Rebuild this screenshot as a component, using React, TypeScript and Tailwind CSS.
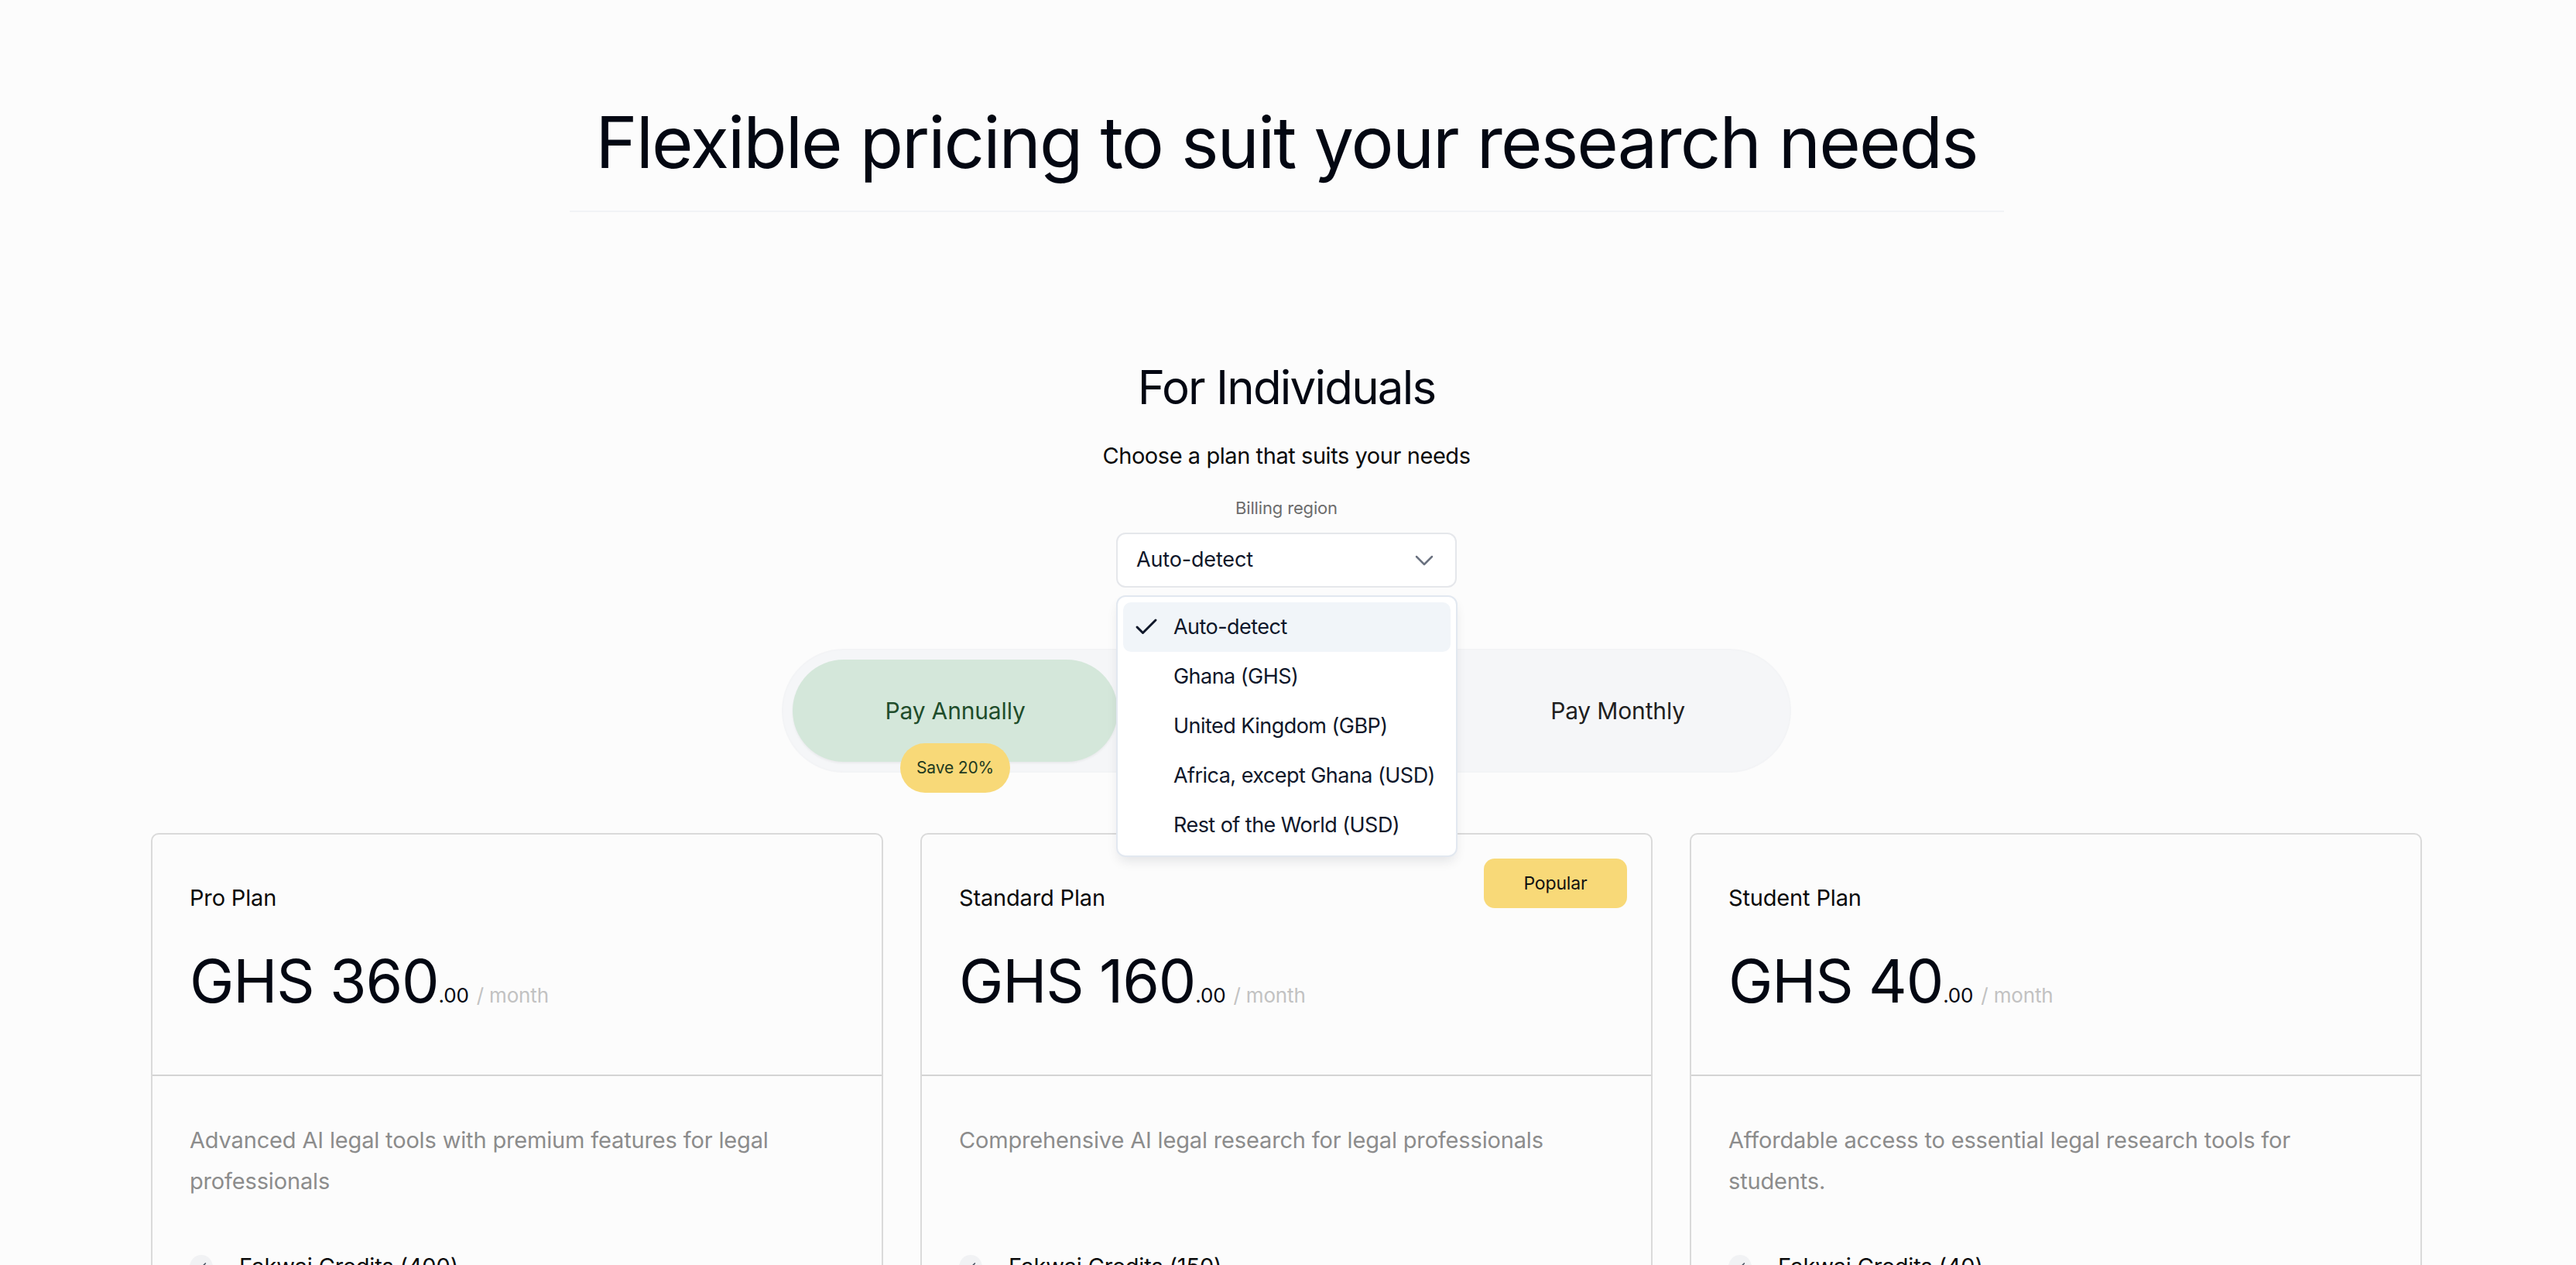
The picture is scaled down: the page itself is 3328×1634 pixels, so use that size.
import { Check, ChevronDown } from "lucide-react";

type Plan = {
  name: string;
  price: string;
  description: string;
  features: string[];
  popular?: boolean;
};

const plans: Plan[] = [
  {
    name: "Pro Plan",
    price: "GHS 360",
    description: "Advanced AI legal tools with premium features for legal professionals",
    features: ["Fakwai Credits (400)", "Unlimited case law search", "Priority support"],
  },
  {
    name: "Standard Plan",
    price: "GHS 160",
    description: "Comprehensive AI legal research for legal professionals",
    features: ["Fakwai Credits (150)", "Case law search", "Email support"],
    popular: true,
  },
  {
    name: "Student Plan",
    price: "GHS 40",
    description: "Affordable access to essential legal research tools for students.",
    features: ["Fakwai Credits (40)", "Case law search", "Community support"],
  },
];

const regions = [
  "Auto-detect",
  "Ghana (GHS)",
  "United Kingdom (GBP)",
  "Africa, except Ghana (USD)",
  "Rest of the World (USD)",
];

function RegionSelect() {
  const selected = "Auto-detect";
  return (
    <div className="relative mt-[16px] w-[440px]">
      <button className="flex h-[71px] w-full items-center justify-between rounded-[12px] border-2 border-[#e5e7eb] bg-white pl-[24px] pr-[20px] text-[27px] text-[#0f172a]">
        <span>{selected}</span>
        <ChevronDown size={40} strokeWidth={1.5} className="text-[#6b7280]" />
      </button>
      <div className="absolute left-0 top-[81px] z-10 w-[441px] rounded-[12px] border-2 border-[#e2e8f0] bg-white p-[7px] shadow-[0_8px_16px_-4px_rgba(15,23,42,0.12)]">
        {regions.map((r) => (
          <div
            key={r}
            className={`relative flex h-[64px] items-center rounded-[10px] pl-[65px] text-[27px] tracking-[-0.02em] text-[#0f172a] ${
              r === selected ? "bg-[#f1f5f9]" : ""
            }`}
          >
            {r === selected && (
              <Check size={36} strokeWidth={2} className="absolute left-[12px] top-[14px]" />
            )}
            {r}
          </div>
        ))}
      </div>
    </div>
  );
}

function BillingToggle() {
  return (
    <div className="mt-[81px] flex h-[156px] w-[1300px] justify-between rounded-full bg-[#f5f6f8] p-[12px] shadow-[0_0_0_2px_rgba(240,241,244,0.8)]">
      <button className="relative h-[132px] w-[420px] rounded-full bg-[#d4e7da] text-[30px] text-[#1f4d2b] shadow-[0_2px_3px_rgba(0,0,0,0.05)]">
        Pay Annually
        <span className="absolute left-1/2 top-[108px] flex h-[64px] w-[142px] -translate-x-1/2 items-center justify-center rounded-full bg-[#f8d978] text-[21px] text-[#1f3a1f]">
          Save 20%
        </span>
      </button>
      <button className="h-[132px] w-[420px] rounded-full text-[30px] text-[#1f1f1f]">Pay Monthly</button>
    </div>
  );
}

function PlanCard({ plan }: { plan: Plan }) {
  return (
    <div className="relative rounded-[10px] border-2 border-[#dadada] bg-[#fcfcfc]">
      {plan.popular && (
        <span className="absolute right-[31px] top-[31px] flex h-[64px] w-[185px] items-center justify-center rounded-[14px] bg-[#f8d978] text-[23px] text-[#111111]">
          Popular
        </span>
      )}
      <div className="border-b-2 border-[#d4d4d4] px-[48px] pb-[82px] pt-[62px]">
        <h3 className="text-[29px] leading-[40px] text-[#0a0a0a]">{plan.name}</h3>
        <div className="mt-[49px] flex items-baseline">
          <span className="text-[77px] leading-[77px] tracking-[-0.015em] text-[#030712]">{plan.price}</span>
          <span className="text-[26px] text-[#030712]">.00</span>
          <span className="ml-[10px] text-[26px] text-[#c2c2c2]">/ month</span>
        </div>
      </div>
      <div className="px-[48px] pb-[56px] pt-[56px]">
        <p className="min-h-[106px] text-[29px] leading-[53px] text-[#8c8c8c]">{plan.description}</p>
        <ul className="mt-[64px] flex flex-col gap-[20px]">
          {plan.features.map((f) => (
            <li key={f} className="flex h-[40px] items-center gap-[34px] text-[29px] text-[#0a0a0a]">
              <span className="flex h-[30px] w-[30px] items-center justify-center rounded-full bg-[#f1f2f4]">
                <Check size={16} strokeWidth={2.5} className="text-[#4b5563]" />
              </span>
              {f}
            </li>
          ))}
        </ul>
      </div>
    </div>
  );
}

export default function App() {
  return (
    <div className="h-screen overflow-hidden bg-[#fcfcfc] pr-[4px] font-['Inter',sans-serif] tracking-[-0.01em]">
      <div className="flex flex-col items-center">
        <h1 className="pt-[134px] text-[92px] leading-[100px] tracking-[-0.021em] text-[#030712]">
          Flexible pricing to suit your research needs
        </h1>
        <div className="mt-[38px] h-[2px] w-[1853px] bg-[#f1f3f6]" />

        <h2 className="mt-[190px] text-[60px] leading-[72px] tracking-[-0.03em] text-[#030712]">For Individuals</h2>
        <p className="mt-[33px] text-[29px] leading-[40px] tracking-[-0.015em] text-[#0a0a0a]">
          Choose a plan that suits your needs
        </p>
        <p className="mt-[31px] text-[22px] leading-[32px] text-[#6b6b6b]">Billing region</p>

        <RegionSelect />
        <BillingToggle />

        <div className="mt-[80px] grid w-[2934px] grid-cols-3 gap-[48px]">
          {plans.map((p) => (
            <PlanCard key={p.name} plan={p} />
          ))}
        </div>
      </div>
    </div>
  );
}
